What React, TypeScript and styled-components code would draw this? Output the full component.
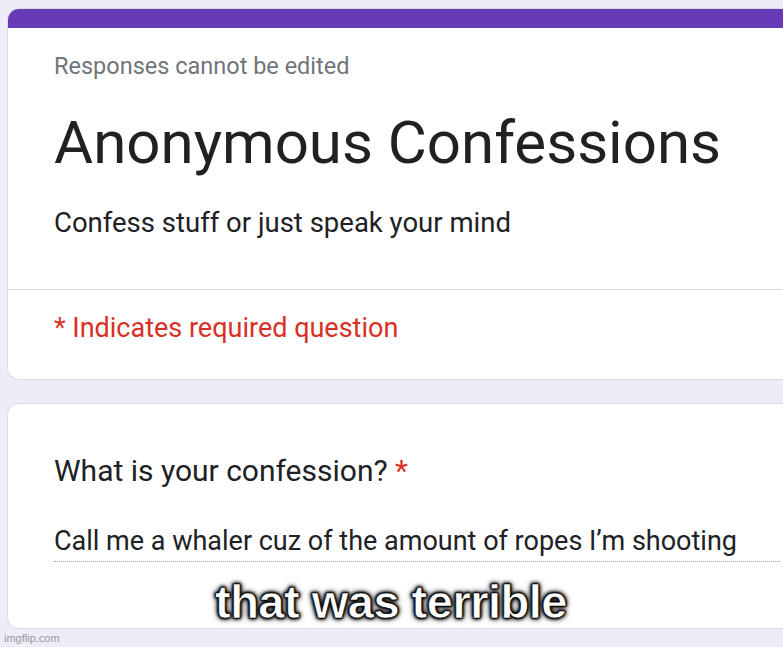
import React from 'react';
import styled, { createGlobalStyle } from 'styled-components';

const GlobalStyle = createGlobalStyle`
  html, body {
    margin: 0;
    padding: 0;
    background: #efebf8;
    overflow: hidden;
  }
  body {
    font-family: Roboto, "Liberation Sans", Arial, sans-serif;
  }
`;

const Page = styled.div`
  position: relative;
  width: 783px;
  height: 647px;
  overflow: hidden;
  padding: 8px 0 0 7px;
  box-sizing: border-box;
  display: flex;
  flex-direction: column;
  gap: 23px;
`;

const Card = styled.div`
  width: 820px;
  flex-shrink: 0;
  background: #fff;
  border: 1px solid #dadce0;
  border-radius: 12px;
  overflow: hidden;
  box-sizing: border-box;
`;

const AccentBar = styled.div`
  height: 19px;
  background: #673ab7;
`;

const Header = styled.div`
  padding: 25px 46px 0;
  height: 262px;
  box-sizing: border-box;
  border-bottom: 1px solid #dadce0;
`;

const Note = styled.div`
  font-size: 23.5px;
  line-height: 26px;
  color: #70757a;
`;

const Title = styled.h1`
  margin: 28px 0 0;
  font-size: 60px;
  font-weight: 400;
  line-height: 72px;
  color: #202124;
`;

const Description = styled.p`
  margin: 28px 0 0;
  font-size: 27.5px;
  line-height: 32px;
  color: #202124;
`;

const Footer = styled.div`
  height: 89px;
  padding: 22px 46px 0;
  box-sizing: border-box;
`;

const Required = styled.div`
  font-size: 27px;
  line-height: 32px;
  color: #d93025;
`;

const Question = styled.div`
  padding: 50px 46px 0;
  height: 224px;
  box-sizing: border-box;
`;

const QuestionTitle = styled.div`
  font-size: 30px;
  line-height: 34px;
  color: #202124;

  span {
    color: #d93025;
  }
`;

const Answer = styled.div`
  margin-top: 37px;
  padding-bottom: 4px;
  font-size: 27px;
  line-height: 32px;
  color: #202124;
  border-bottom: 1px dotted #9aa0a6;
`;

// meme caption laid over the screenshot
const Caption = styled.div`
  position: absolute;
  left: 215px;
  top: 575px;
  font-family: "Liberation Sans", Arial, sans-serif;
  font-weight: 700;
  font-size: 47px;
  line-height: 54px;
  letter-spacing: -0.5px;
  color: #fff;
  -webkit-text-stroke: 0.6px #000;
  text-shadow:
    0 0 1px #000, 0 0 2px #000, 0 0 2px #000, 0 0 3px #000,
    0 0 4px #000, 0 0 5px #000, 0 0 7px rgba(0, 0, 0, 0.7);
`;

const Watermark = styled.div`
  position: absolute;
  left: 4px;
  bottom: 3px;
  font-family: "Liberation Sans", Arial, sans-serif;
  font-size: 11px;
  color: #999;
`;

export default function App() {
  return (
    <>
      <GlobalStyle />
      <Page>
        <Card>
          <AccentBar />
          <Header>
            <Note>Responses cannot be edited</Note>
            <Title>Anonymous Confessions</Title>
            <Description>Confess stuff or just speak your mind</Description>
          </Header>
          <Footer>
            <Required>* Indicates required question</Required>
          </Footer>
        </Card>
        <Card>
          <Question>
            <QuestionTitle>
              What is your confession? <span>*</span>
            </QuestionTitle>
            <Answer>Call me a whaler cuz of the amount of ropes I’m shooting</Answer>
          </Question>
        </Card>
        <Caption>that was terrible</Caption>
        <Watermark>imgflip.com</Watermark>
      </Page>
    </>
  );
}
